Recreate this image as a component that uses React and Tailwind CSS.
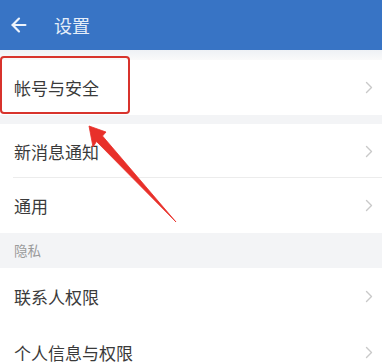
import { ArrowLeft } from "lucide-react";

const font = { fontFamily: '"Noto Sans CJK SC", "Noto Sans", sans-serif' };

function Chevron() {
  return (
    <svg width="8" height="13" viewBox="0 0 8 13" className="shrink-0">
      <path d="M1.5 1.5 L6.5 6.5 L1.5 11.5" fill="none" stroke="#c9c9c9" strokeWidth="1.4" strokeLinecap="round" strokeLinejoin="round" />
    </svg>
  );
}

function Row({ label, h = "h-[55px]", divider = false }) {
  return (
    <div className={`relative flex items-center justify-between bg-white pl-[14px] pr-[9px] ${h}`}>
      <span className="text-[17px] leading-none text-[#3a3a3a]">{label}</span>
      <Chevron />
      {divider && <div className="absolute bottom-0 left-[13px] right-0 h-px bg-[#ececec]" />}
    </div>
  );
}

export default function App() {
  return (
    <div className="relative w-[382px] h-[363px] overflow-hidden bg-[#f3f4f6]" style={font}>
      <div className="flex items-center h-[50px] bg-[#3874c5] pl-[8px]">
        <ArrowLeft className="w-[22px] h-[22px] text-[#eef3fb]" strokeWidth={2.4} />
        <span className="ml-[24px] text-[18px] leading-none text-[#e6eef9]">设置</span>
      </div>
      <div className="h-[10px] bg-gradient-to-b from-[#eef1f5] to-[#fafafa]" />
      <Row label="帐号与安全" />
      <div className="h-[9px]" />
      <Row label="新消息通知" h="h-[54px]" divider />
      <Row label="通用" />
      <div className="flex items-center h-[35px] pl-[14px] text-[13.5px] text-[#9a9a9a]">隐私</div>
      <Row label="联系人权限" h="h-[57px]" />
      <Row label="个人信息与权限" />

      <div className="absolute left-0 top-[56px] w-[130px] h-[58px] border-[2.5px] border-[#d8332c] rounded-[4px]" />
      <svg className="absolute left-0 top-0" width="382" height="363" viewBox="0 0 382 363">
        <path d="M89 126 L106 132 L102.5 136 L176 222 L96.5 141.5 L93 147 Z" fill="#e8302a" strokeLinejoin="round" stroke="#e8302a" strokeWidth="0.8" />
      </svg>
    </div>
  );
}
